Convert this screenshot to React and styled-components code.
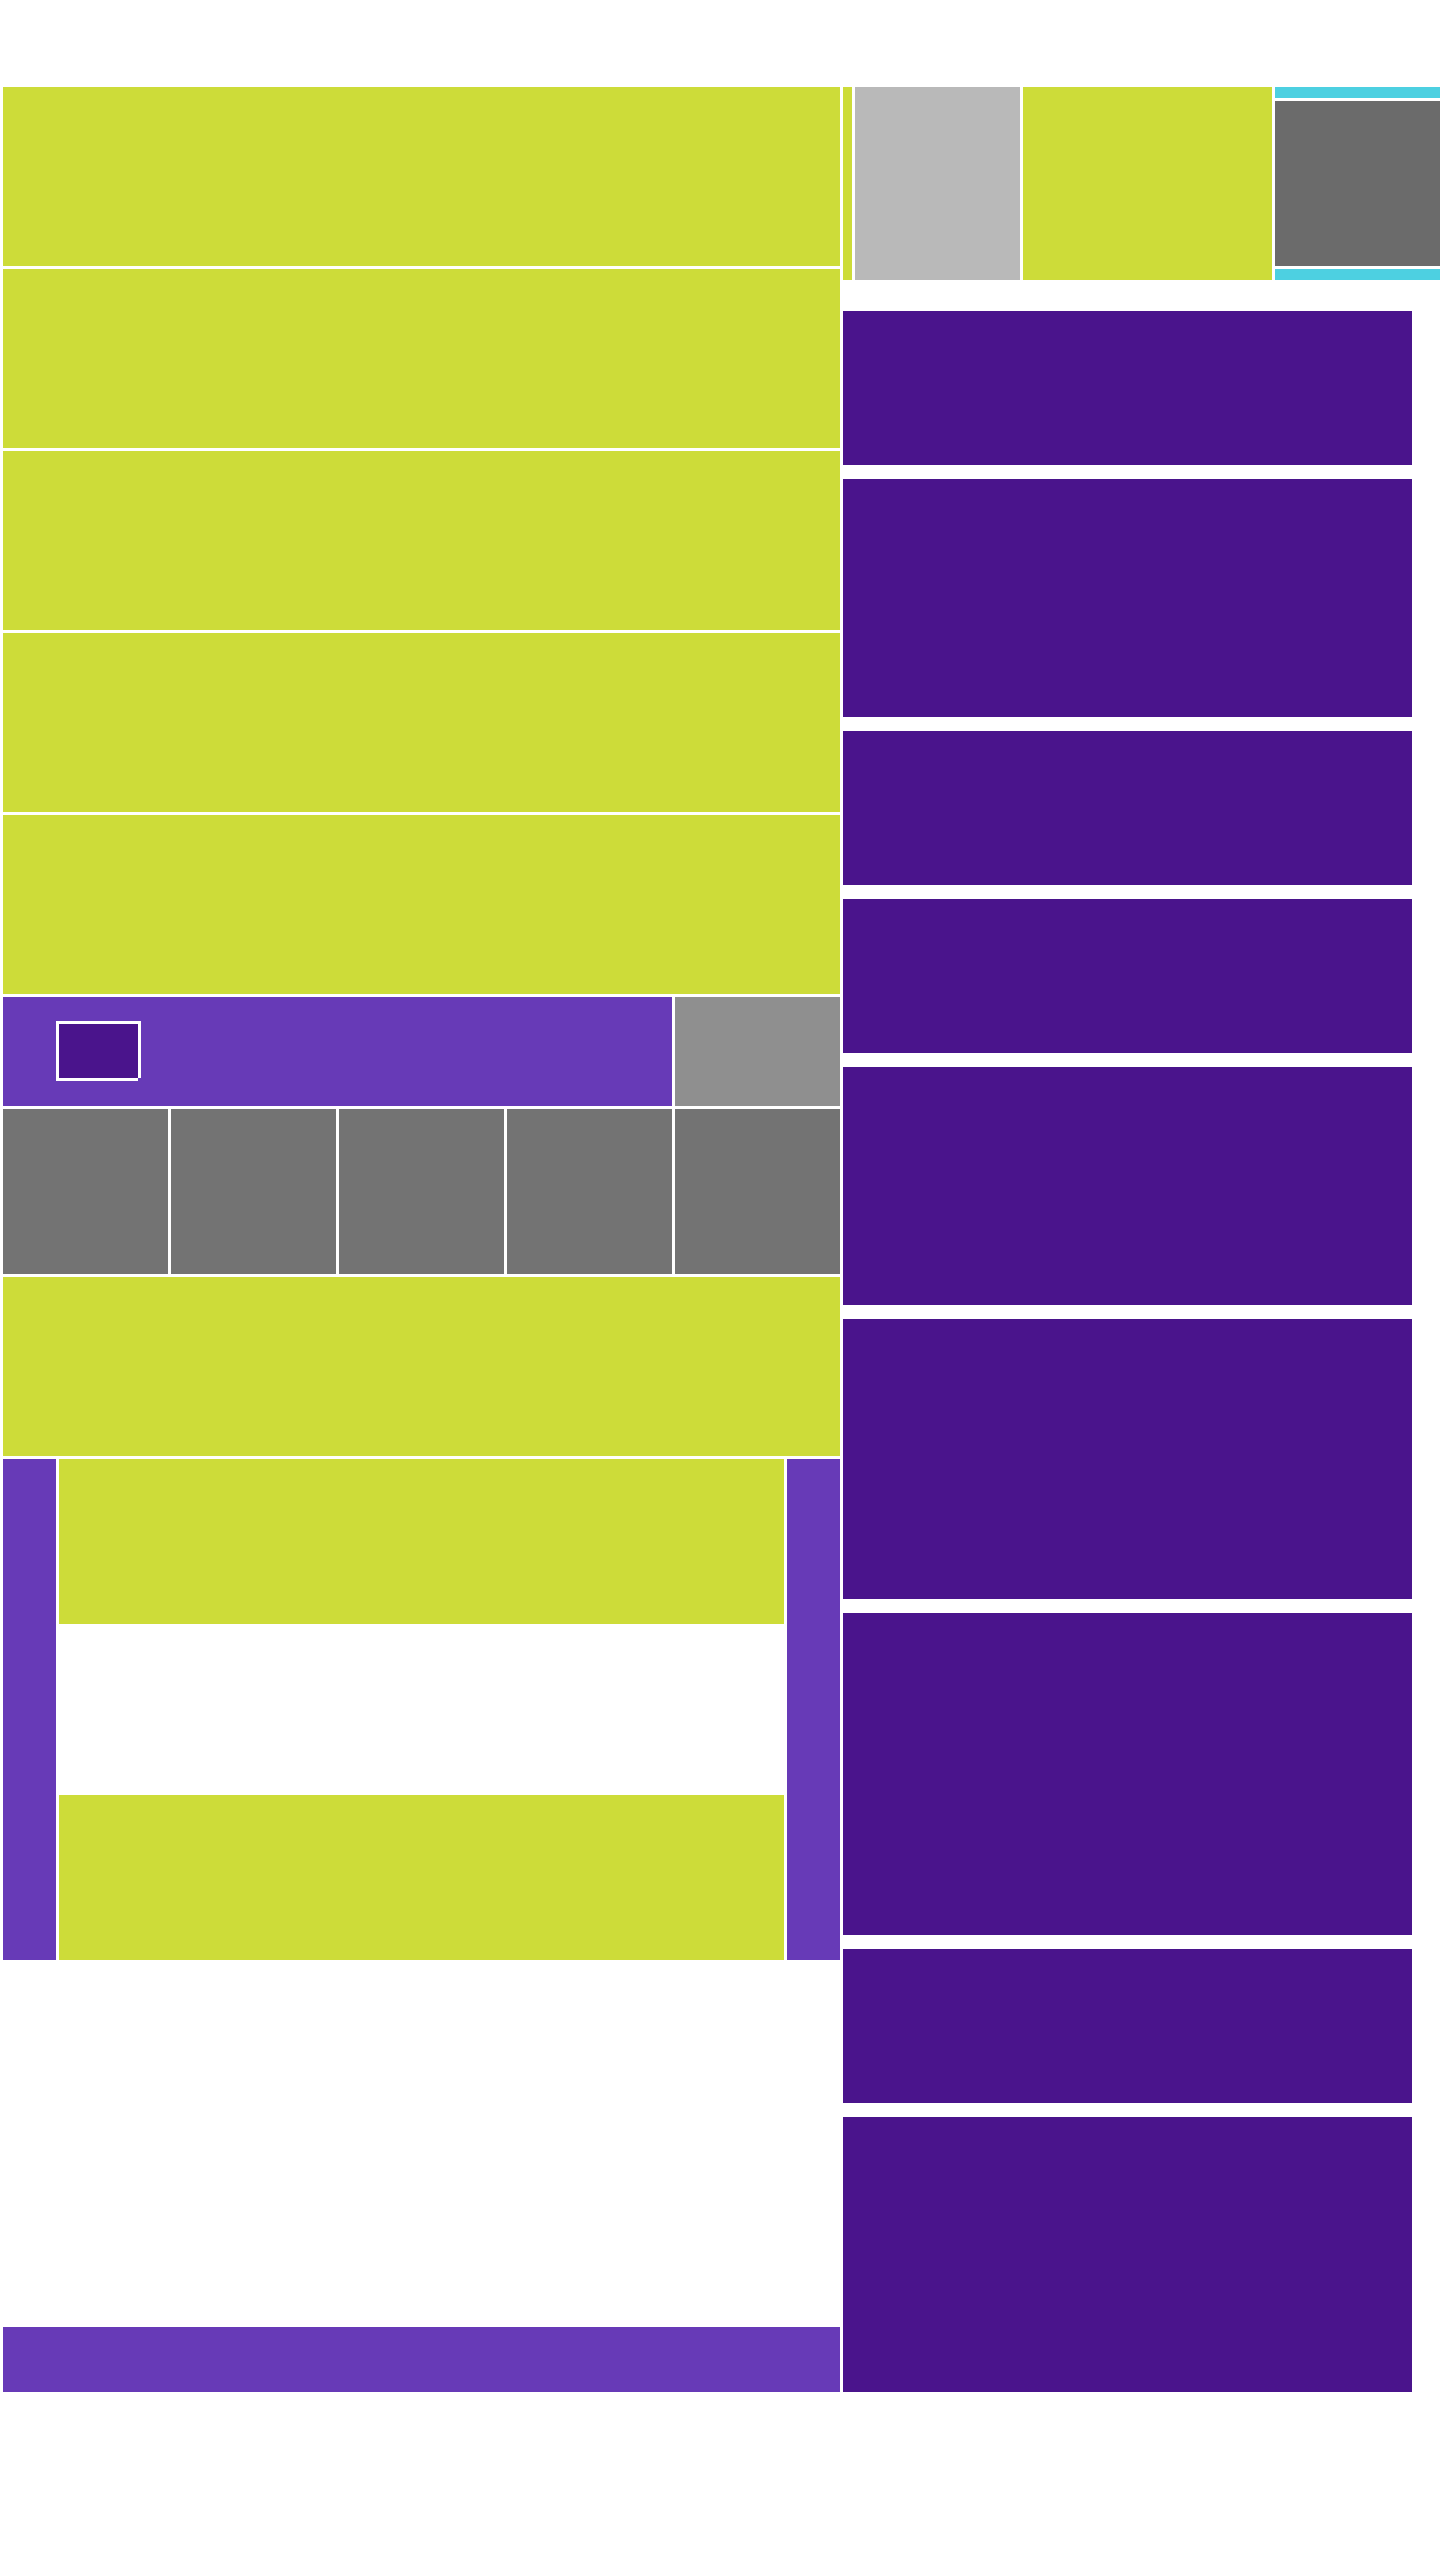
import React from "react";
import styled, { createGlobalStyle } from "styled-components";

const GlobalStyle = createGlobalStyle`
  html, body {
    margin: 0;
    padding: 0;
    background: #ffffff;
    font-family: "Liberation Sans", Arial, sans-serif;
  }
`;

const feedHeights = [154, 238, 154, 154, 238, 280, 322, 154, 275];

const App = () => {
  return (
    <>
      <GlobalStyle />
      <Page>
        <MainColumn>
          {[0, 1, 2, 3, 4].map((i) => (
            <Banner key={i} />
          ))}

          <HeroRow>
            <HeroPanel>
              <Badge />
            </HeroPanel>
            <Tile $tone="#8f8f8f" $tall />
          </HeroRow>

          <TileRow>
            {[0, 1, 2, 3, 4].map((i) => (
              <Tile key={i} />
            ))}
          </TileRow>

          <Banner />

          <Framed>
            <SideRail />
            <FramedBody>
              <Slab />
              <Slab $empty />
              <Slab />
            </FramedBody>
            <SideRail />
          </Framed>

          <Footer />
        </MainColumn>

        <Aside>
          <TopStrip>
            <Sliver />
            <Tile $tone="#b9b9b9" $tall />
            <WideBlock />
            <CyanStack>
              <CyanBar />
              <Tile $tone="#6b6b6b" />
              <CyanBar />
            </CyanStack>
          </TopStrip>

          <Feed>
            {feedHeights.map((h, i) => (
              <FeedCard key={i} $h={h} />
            ))}
          </Feed>
        </Aside>
      </Page>
    </>
  );
};

export default App;

// layout

const Page = styled.div`
  display: flex;
  align-items: stretch;
  gap: 3px;
  width: 1440px;
  box-sizing: border-box;
  padding: 87px 0 0 3px;
  overflow: hidden;
`;

const MainColumn = styled.main`
  width: 837px;
  flex: none;
  display: flex;
  flex-direction: column;
  gap: 3px;
`;

const Aside = styled.aside`
  width: 597px;
  flex: none;
  display: flex;
  flex-direction: column;
`;

// main column parts

const Banner = styled.div`
  height: 179px;
  background: #cddc39;
`;

const HeroRow = styled.div`
  display: flex;
  gap: 3px;
  height: 109px;
`;

const HeroPanel = styled.div`
  flex: 1;
  background: #673ab7;
  padding: 27px 0 0 56px;
  box-sizing: border-box;
`;

const Badge = styled.div`
  width: 79px;
  height: 54px;
  background: #4a148c;
  box-shadow: -3px -3px 0 #fff, 3px -3px 0 #fff, -3px 3px 0 #fff,
    3px 0 0 #fff, 0 3px 0 #fff;
`;

const Tile = styled.div`
  width: 165px;
  height: ${(p) => (p.$tall ? "100%" : "165px")};
  flex: none;
  background: ${(p) => p.$tone || "#737373"};
`;

const TileRow = styled.div`
  display: flex;
  gap: 3px;
  height: 165px;
`;

const Framed = styled.section`
  display: flex;
  gap: 3px;
  height: 501px;
`;

const SideRail = styled.div`
  width: 53px;
  background: #673ab7;
`;

const FramedBody = styled.div`
  flex: 1;
  display: flex;
  flex-direction: column;
  gap: 3px;
`;

const Slab = styled.div`
  height: 165px;
  background: ${(p) => (p.$empty ? "transparent" : "#cddc39")};
`;

const Footer = styled.footer`
  margin-top: auto;
  height: 65px;
  background: #673ab7;
`;

// aside parts

const TopStrip = styled.div`
  display: flex;
  gap: 3px;
  height: 193px;
`;

const Sliver = styled.div`
  width: 9px;
  background: #cddc39;
`;

const WideBlock = styled.div`
  width: 249px;
  background: #cddc39;
`;

const CyanStack = styled.div`
  width: 165px;
  display: flex;
  flex-direction: column;
  gap: 3px;
`;

const CyanBar = styled.div`
  height: 11px;
  background: #4dd0e1;
`;

const Feed = styled.div`
  margin-top: 31px;
  width: 569px;
  display: flex;
  flex-direction: column;
  gap: 14px;
`;

const FeedCard = styled.article`
  height: ${(p) => p.$h}px;
  background: #4a148c;
`;
